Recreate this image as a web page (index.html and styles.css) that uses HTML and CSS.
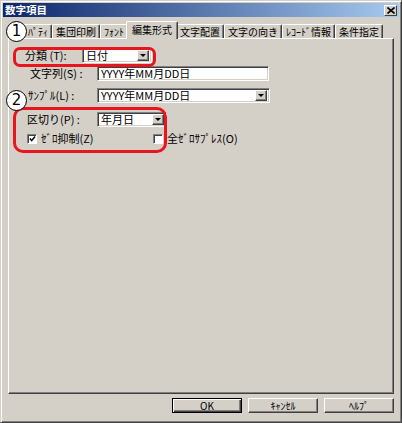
FILE: index.html
```html
<!DOCTYPE html>
<html lang="ja">
<head>
<meta charset="utf-8">
<title>数字項目</title>
<link rel="stylesheet" href="styles.css">
</head>
<body>
<div class="window">
  <div class="titlebar">
    <span class="title">数字項目</span>
    <span class="close"><svg width="8" height="7" viewBox="0 0 8 7"><path d="M0.5 0.5 L7.5 6.5 M7.5 0.5 L0.5 6.5" stroke="#000" stroke-width="1.6"/></svg></span>
  </div>
  <div class="tabs">
    <div class="tab">ﾊﾟﾃｨ</div>
    <div class="tab">集団印刷</div>
    <div class="tab">ﾌｫﾝﾄ</div>
    <div class="tab tab-active">編集形式</div>
    <div class="tab">文字配置</div>
    <div class="tab">文字の向き</div>
    <div class="tab">ﾚｺｰﾄﾞ情報</div>
    <div class="tab">条件指定</div>
  </div>
  <div class="panel">
    <div class="row row-category">
      <span class="label">分類 (T):</span>
      <div class="combo combo-short"><span class="value">日付</span><span class="arrow"></span></div>
    </div>
    <div class="row row-text">
      <span class="label">文字列(S) :</span>
      <div class="textbox"><span class="value">YYYY年MM月DD日</span></div>
    </div>
    <div class="row row-sample">
      <span class="label">ｻﾝﾌﾟﾙ(L) :</span>
      <div class="combo combo-long"><span class="value">YYYY年MM月DD日</span><span class="arrow"></span></div>
    </div>
    <div class="row row-sep">
      <span class="label">区切り(P) :</span>
      <div class="combo combo-short"><span class="value">年月日</span><span class="arrow"></span></div>
    </div>
    <div class="row row-checks">
      <label class="check check-first"><span class="box"><svg width="8" height="8" viewBox="0 0 8 8"><path d="M1 3.5 L3 5.8 L7 1.2" fill="none" stroke="#000" stroke-width="1.6"/></svg></span><span>ｾﾞﾛ抑制(Z)</span></label>
      <label class="check"><span class="box"></span><span>全ｾﾞﾛｻﾌﾟﾚｽ(O)</span></label>
    </div>
  </div>
  <div class="buttons">
    <div class="btn btn-default">OK</div>
    <div class="btn">ｷｬﾝｾﾙ</div>
    <div class="btn">ﾍﾙﾌﾟ</div>
  </div>

  <div class="mark mark-1"></div>
  <div class="mark mark-2"></div>
  <div class="badge badge-1">1</div>
  <div class="badge badge-2">2</div>
</div>
</body>
</html>
```

FILE: styles.css
```css
* { box-sizing: border-box; }
html, body { margin: 0; padding: 0; }
body {
  font-family: "Noto Sans CJK JP", sans-serif;
  font-size: 11px;
  color: #000;
  background: #fff;
}
.window {
  position: relative;
  width: 402px;
  height: 423px;
  background: #d4d0c8;
  border: 1px solid;
  border-color: #d4d0c8 #404040 #404040 #d4d0c8;
  box-shadow: inset 1px 1px #fff, inset -1px -1px #808080;
  padding: 2px;
  display: flex;
  flex-direction: column;
}
.titlebar {
  height: 14px;
  flex: none;
  background: linear-gradient(to right, #0a246a, #a6caf0);
  display: flex;
  align-items: center;
  justify-content: space-between;
  padding: 0 2px 0 2px;
}
.title {
  color: #fff;
  font-weight: bold;
  font-size: 10.5px;
  line-height: 14px;
}
.close {
  width: 13px;
  height: 11px;
  background: #d4d0c8;
  border: 1px solid;
  border-color: #fff #404040 #404040 #fff;
  display: flex;
  align-items: center;
  justify-content: center;
}
.tabs {
  display: flex;
  align-items: flex-end;
  height: 17px;
  margin: 4px 0 0 21px;
  flex: none;
  position: relative;
  z-index: 1;
}
.tab {
  height: 14px;
  padding: 0 3px;
  border: 1px solid;
  border-bottom: none;
  border-color: #fff #404040 #fff #fff;
  border-radius: 2px 2px 0 0;
  box-shadow: inset -1px 0 #808080;
  font-size: 10px;
  line-height: 13px;
  white-space: nowrap;
  background: #d4d0c8;
}
.tab-active {
  height: 18px;
  margin: 0 -2px -1px;
  padding: 0 5px;
  line-height: 15px;
  position: relative;
  z-index: 2;
}
.panel {
  width: 386px;
  height: 356px;
  margin-left: 5px;
  flex: none;
  border: 1px solid;
  border-color: #fff #404040 #404040 #fff;
  box-shadow: inset -1px -1px #808080;
  display: flex;
  flex-direction: column;
}
.row {
  display: flex;
  align-items: center;
  height: 15px;
  flex: none;
}
.label {
  flex: none;
  width: 88px;
  white-space: nowrap;
  line-height: 13px;
}
.row-category { margin-top: 9px; }
.row-category .label { width: 73px; padding-left: 16px; }
.row-text { margin-top: 3px; }
.row-text .label { padding-left: 21px; }
.row-sample { margin-top: 7px; }
.row-sample .label { padding-left: 19px; }
.row-sep { margin-top: 9px; }
.row-sep .label { padding-left: 18px; }
.row-checks { margin-top: 5px; height: 13px; padding-left: 18px; }

.combo, .textbox {
  height: 15px;
  background: #fff;
  border: 1px solid;
  border-color: #808080 #fff #fff #808080;
  box-shadow: inset 1px 1px #404040, inset -1px -1px #d4d0c8;
  padding: 2px;
  display: flex;
  align-items: center;
}
.value {
  padding-left: 1px;
  line-height: 11px;
  white-space: nowrap;
}
.combo-short { width: 70px; }
.combo-long { width: 173px; }
.textbox { width: 172px; }
.arrow {
  margin-left: auto;
  width: 12px;
  height: 11px;
  background: #d4d0c8;
  border: 1px solid;
  border-color: #fff #404040 #404040 #fff;
  box-shadow: inset -1px -1px #808080;
  position: relative;
}
.arrow::after {
  content: "";
  position: absolute;
  left: 2px;
  top: 3px;
  border-left: 3px solid transparent;
  border-right: 3px solid transparent;
  border-top: 3px solid #000;
}
.check {
  display: flex;
  align-items: center;
  gap: 4px;
  white-space: nowrap;
  line-height: 13px;
}
.check-first { width: 126px; }
.box {
  width: 10px;
  height: 10px;
  background: #fff;
  border: 1px solid;
  border-color: #808080 #fff #fff #808080;
  box-shadow: inset 1px 1px #404040;
  display: flex;
  align-items: center;
  justify-content: center;
  padding: 1px 0 0 1px;
}
.buttons {
  display: flex;
  justify-content: flex-end;
  gap: 6px;
  margin-top: 4px;
  padding-right: 5px;
}
.btn {
  width: 70px;
  height: 15px;
  border: 1px solid;
  border-color: #fff #404040 #404040 #fff;
  box-shadow: inset -1px -1px #808080;
  font-size: 10px;
  line-height: 13px;
  text-align: center;
}
.btn-default {
  border-color: #000;
  box-shadow: inset 1px 1px #fff, inset -1px -1px #404040, inset -2px -2px #808080;
}
.mark {
  position: absolute;
  border: 3px solid #e8141e;
  border-radius: 7px;
  z-index: 3;
}
.mark-1 { left: 12px; top: 46px; width: 143px; height: 20px; }
.mark-2 { left: 12px; top: 106px; width: 154px; height: 46px; border-radius: 10px; }
.badge {
  position: absolute;
  width: 21px;
  height: 21px;
  border-radius: 50%;
  background: #fff;
  border: 1.5px solid #000;
  font-family: "DejaVu Sans", sans-serif;
  font-size: 15px;
  line-height: 18px;
  text-align: center;
  z-index: 4;
}
.badge-1 { left: 5px; top: 20px; }
.badge-2 { left: 5px; top: 89px; }
```
